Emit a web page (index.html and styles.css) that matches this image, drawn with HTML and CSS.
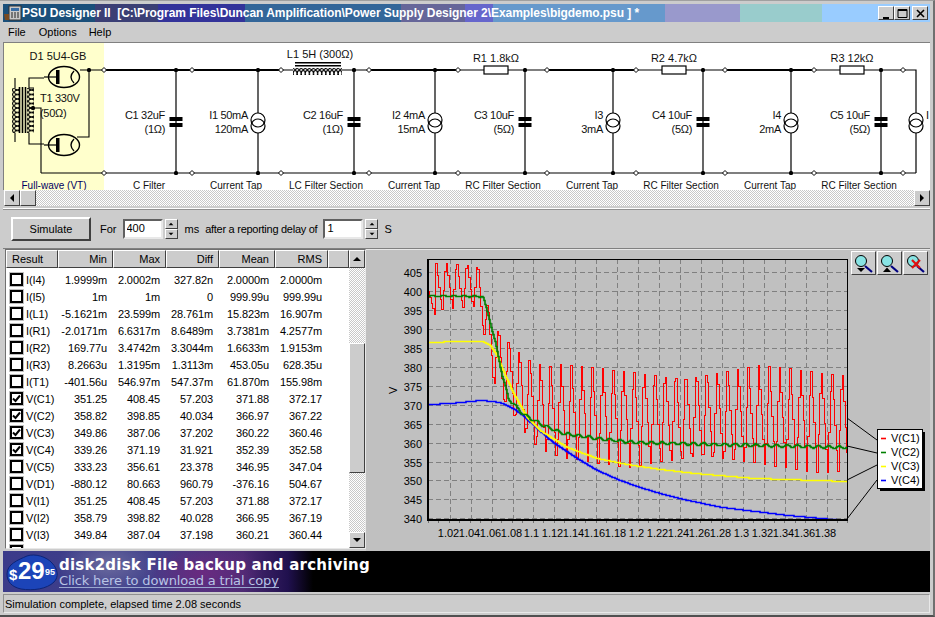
FILE: index.html
```html
<!DOCTYPE html>
<html lang="en">
<head>
<meta charset="utf-8">
<title>PSU Designer II</title>
<link rel="stylesheet" href="styles.css">
</head>
<body>
<div class="window">
  <div class="titlebar">
    <svg class="appicon" width="18" height="16" viewBox="0 0 18 16">
      <rect x="5" y="1" width="12" height="14" fill="#c8c8c8" stroke="#333"/>
      <rect x="7" y="3" width="8" height="3" fill="#3a6ea5"/>
      <path d="M7 8h2M10 8h2M13 8h2M7 10h2M10 10h2M13 10h2M7 12h2M10 12h2M13 12h2" stroke="#222"/>
      <path d="M0 9h5v6H1z" fill="#7a4a20"/>
    </svg>
    <span class="titletext">PSU Designer II&nbsp; [C:\Program Files\Duncan Amplification\Power Supply Designer 2\Examples\bigdemo.psu ] *</span>
    <div class="capbtns">
      <span class="capbtn"><svg width="15" height="13"><path d="M4 10h6v2H4z"/></svg></span>
      <span class="capbtn"><svg width="15" height="13"><path d="M3 2.5h9v8H3zM3 3.5h9" fill="none" stroke="#000"/></svg></span>
      <span class="capbtn capclose"><svg width="15" height="13"><path d="M4 3l7 7M11 3l-7 7" stroke="#000" stroke-width="1.6"/></svg></span>
    </div>
  </div>
  <div class="menubar"><span>File</span><span>Options</span><span>Help</span></div>

  <div class="schematic">
    <svg width="925" height="147" viewBox="4 43 925 147">
      <defs>
        <g id="node"><path d="M-2.5 0L0-2.5L2.5 0L0 2.5z" fill="#fff" stroke="#000"/></g>
        <g id="dot"><rect x="-2" y="-2" width="4" height="4" rx="1.5" fill="#000"/></g>
        <g id="cap"><path d="M0 70V173" stroke="#000" stroke-width="1.2"/><rect x="-6.5" y="117" width="13" height="4" fill="#000"/><rect x="-6.5" y="123" width="13" height="4" fill="#000"/></g>
        <g id="src"><path d="M0 70V113M0 133V173" stroke="#000" stroke-width="1.2"/><circle cy="120" r="7" fill="none" stroke="#000" stroke-width="1.2"/><circle cy="126" r="7" fill="none" stroke="#000" stroke-width="1.2"/></g>
        <g id="res"><rect x="0" y="66" width="24" height="8" fill="#fff" stroke="#000" stroke-width="1.2"/></g>
        <g id="tube"><ellipse cx="0" cy="0" rx="15.500" ry="10.500" fill="none" stroke="#000" stroke-width="1.4"/><rect x="-8" y="-7" width="3.5" height="14" fill="#000"/><path d="M10-6Q4 0 10 6" fill="none" stroke="#000" stroke-width="1.3"/><path d="M-20 0h12" stroke="#000" stroke-width="1.2"/></g>
        <pattern id="coilv" width="7" height="4.5" patternUnits="userSpaceOnUse"><ellipse cx="3.5" cy="2.25" rx="3" ry="2.1" fill="none" stroke="#000"/></pattern>
        <pattern id="coilh" x="293" width="4.1" height="7" patternUnits="userSpaceOnUse"><ellipse cx="2.05" cy="3.5" rx="1.9" ry="3" fill="none" stroke="#000"/></pattern>
      </defs>
      <rect x="4" y="43" width="100" height="147" fill="#ffffcc"/>
      <path d="M104 70H281M369 70H458M547 70H636M725 70H814" stroke="#000" stroke-width="2"/>
      <path d="M281 70H293M342 70H369M458 70H484M508 70H547M636 70H662M686 70H725M814 70H840M864 70H916V113M916 133V173M41 173H916" fill="none" stroke="#000" stroke-width="1.2"/>
      <rect x="295" y="62" width="46" height="1.5"/><rect x="295" y="65" width="46" height="1.5"/>
      <rect x="293" y="68" width="49" height="7" fill="url(#coilh)"/>

      <rect x="12" y="88" width="7" height="45" fill="url(#coilv)"/>
      <rect x="27" y="88" width="7" height="45" fill="url(#coilv)"/>
      <path d="M19.5 87V133M22.5 87V133M25.5 87V133" stroke="#000" stroke-width="1.6"/>
      <path d="M15 78V88M15 133V142M34 88H29V78H44M29 133V144H44M33 108H41V173M80 70H104M89 70V137H77" fill="none" stroke="#000" stroke-width="1.1"/>
      <use href="#tube" x="64" y="77"/><use href="#tube" x="64" y="145"/>
      <use href="#dot" x="89" y="70"/><use href="#dot" x="33" y="108"/>

      <use href="#cap" x="176"/><use href="#cap" x="354"/><use href="#cap" x="525"/><use href="#cap" x="703"/><use href="#cap" x="881"/>
      <use href="#src" x="258"/><use href="#src" x="435"/><use href="#src" x="613"/><use href="#src" x="791"/>
      <circle cx="916" cy="120" r="7" fill="none" stroke="#000" stroke-width="1.2"/><circle cx="916" cy="126" r="7" fill="none" stroke="#000" stroke-width="1.2"/>
      <use href="#res" x="484"/><use href="#res" x="662"/><use href="#res" x="840"/>

      <g id="rail-dots">
        <use href="#dot" x="176" y="70"/><use href="#dot" x="258" y="70"/><use href="#dot" x="354" y="70"/><use href="#dot" x="435" y="70"/><use href="#dot" x="525" y="70"/><use href="#dot" x="613" y="70"/><use href="#dot" x="703" y="70"/><use href="#dot" x="791" y="70"/><use href="#dot" x="881" y="70"/>
        <use href="#dot" x="176" y="173"/><use href="#dot" x="258" y="173"/><use href="#dot" x="354" y="173"/><use href="#dot" x="435" y="173"/><use href="#dot" x="525" y="173"/><use href="#dot" x="613" y="173"/><use href="#dot" x="703" y="173"/><use href="#dot" x="791" y="173"/><use href="#dot" x="881" y="173"/>
      </g>
      <g id="rail-nodes">
        <use href="#node" x="104" y="70"/><use href="#node" x="192" y="70"/><use href="#node" x="281" y="70"/><use href="#node" x="369" y="70"/><use href="#node" x="458" y="70"/><use href="#node" x="547" y="70"/><use href="#node" x="636" y="70"/><use href="#node" x="725" y="70"/><use href="#node" x="814" y="70"/><use href="#node" x="903" y="70"/>
        <use href="#node" x="104" y="173"/><use href="#node" x="192" y="173"/><use href="#node" x="281" y="173"/><use href="#node" x="369" y="173"/><use href="#node" x="458" y="173"/><use href="#node" x="547" y="173"/><use href="#node" x="636" y="173"/><use href="#node" x="725" y="173"/><use href="#node" x="814" y="173"/><use href="#node" x="903" y="173"/>
      </g>

      <g class="lbl mid">
        <text x="58" y="60">D1 5U4-GB</text>
        <text x="320" y="58">L1 5H (300Ω)</text>
        <text x="496" y="62">R1 1.8kΩ</text>
        <text x="674" y="62">R2 4.7kΩ</text>
        <text x="852" y="62">R3 12kΩ</text>
      </g>
      <g class="lbl tight">
        <text x="40" y="102">T1 330V</text>
        <text x="40" y="117">(50Ω)</text>
        <text x="926" y="119">I</text>
      </g>
      <g class="lbl end tight">
        <text x="165" y="119">C1 32uF</text><text x="165" y="133">(1Ω)</text>
        <text x="248" y="119">I1 50mA</text><text x="248" y="133">120mA</text>
        <text x="343" y="119">C2 16uF</text><text x="343" y="133">(1Ω)</text>
        <text x="425" y="119">I2 4mA</text><text x="425" y="133">15mA</text>
        <text x="514" y="119">C3 10uF</text><text x="514" y="133">(5Ω)</text>
        <text x="603" y="119">I3</text><text x="603" y="133">3mA</text>
        <text x="692" y="119">C4 10uF</text><text x="692" y="133">(5Ω)</text>
        <text x="781" y="119">I4</text><text x="781" y="133">2mA</text>
        <text x="870" y="119">C5 10uF</text><text x="870" y="133">(5Ω)</text>
      </g>
      <g class="lbl mid sect">
        <text class="navy" x="54" y="189">Full-wave (VT)</text>
        <text x="149" y="189">C Filter</text>
        <text x="236" y="189">Current Tap</text>
        <text x="326" y="189">LC Filter Section</text>
        <text x="414" y="189">Current Tap</text>
        <text x="503" y="189">RC Filter Section</text>
        <text x="592" y="189">Current Tap</text>
        <text x="681" y="189">RC Filter Section</text>
        <text x="770" y="189">Current Tap</text>
        <text x="859" y="189">RC Filter Section</text>
      </g>
    </svg>
  </div>

  <div class="hscroll">
    <span class="sbtn"><i class="arr arr-l"></i></span>
    <span class="sbtn"></span>
    <span class="strack"></span>
    <span class="sbtn"><i class="arr arr-r"></i></span>
  </div>

  <div class="toolbar">
    <button class="simulate">Simulate</button>
    <span class="t-for">For</span>
    <input class="field" value="400">
    <span class="spin"><span class="spinbtn"><i class="arr arr-u"></i></span><span class="spinbtn"><i class="arr arr-d"></i></span></span>
    <span class="t-ms">ms</span>
    <span class="t-after">after a reporting delay of</span>
    <input class="field" value="1">
    <span class="spin"><span class="spinbtn"><i class="arr arr-u"></i></span><span class="spinbtn"><i class="arr arr-d"></i></span></span>
    <span class="t-s">S</span>
  </div>

  <div class="main">
    <div class="results">
      <div class="grid">
        <div class="row-h">
          <span class="h h-l">Result</span><span class="h">Min</span><span class="h">Max</span><span class="h">Diff</span><span class="h">Mean</span><span class="h">RMS</span><span class="h"></span>
        </div>
        <div class="rows">
          <div class="row"><span class="name"><b class="cb"></b>I(I4)</span><span>1.9999m</span><span>2.0002m</span><span>327.82n</span><span>2.0000m</span><span>2.0000m</span></div>
          <div class="row"><span class="name"><b class="cb"></b>I(I5)</span><span>1m</span><span>1m</span><span>0</span><span>999.99u</span><span>999.99u</span></div>
          <div class="row"><span class="name"><b class="cb"></b>I(L1)</span><span>-5.1621m</span><span>23.599m</span><span>28.761m</span><span>15.823m</span><span>16.907m</span></div>
          <div class="row"><span class="name"><b class="cb"></b>I(R1)</span><span>-2.0171m</span><span>6.6317m</span><span>8.6489m</span><span>3.7381m</span><span>4.2577m</span></div>
          <div class="row"><span class="name"><b class="cb"></b>I(R2)</span><span>169.77u</span><span>3.4742m</span><span>3.3044m</span><span>1.6633m</span><span>1.9153m</span></div>
          <div class="row"><span class="name"><b class="cb"></b>I(R3)</span><span>8.2663u</span><span>1.3195m</span><span>1.3113m</span><span>453.05u</span><span>628.35u</span></div>
          <div class="row"><span class="name"><b class="cb"></b>I(T1)</span><span>-401.56u</span><span>546.97m</span><span>547.37m</span><span>61.870m</span><span>155.98m</span></div>
          <div class="row"><span class="name"><b class="cb on"><svg width="9" height="9"><path d="M1 4.5L3.5 7L8 1.5" fill="none" stroke="#000" stroke-width="2"/></svg></b>V(C1)</span><span>351.25</span><span>408.45</span><span>57.203</span><span>371.88</span><span>372.17</span></div>
          <div class="row"><span class="name"><b class="cb on"><svg width="9" height="9"><path d="M1 4.5L3.5 7L8 1.5" fill="none" stroke="#000" stroke-width="2"/></svg></b>V(C2)</span><span>358.82</span><span>398.85</span><span>40.034</span><span>366.97</span><span>367.22</span></div>
          <div class="row"><span class="name"><b class="cb on"><svg width="9" height="9"><path d="M1 4.5L3.5 7L8 1.5" fill="none" stroke="#000" stroke-width="2"/></svg></b>V(C3)</span><span>349.86</span><span>387.06</span><span>37.202</span><span>360.22</span><span>360.46</span></div>
          <div class="row"><span class="name"><b class="cb on"><svg width="9" height="9"><path d="M1 4.5L3.5 7L8 1.5" fill="none" stroke="#000" stroke-width="2"/></svg></b>V(C4)</span><span>339.26</span><span>371.19</span><span>31.921</span><span>352.39</span><span>352.58</span></div>
          <div class="row"><span class="name"><b class="cb"></b>V(C5)</span><span>333.23</span><span>356.61</span><span>23.378</span><span>346.95</span><span>347.04</span></div>
          <div class="row"><span class="name"><b class="cb"></b>V(D1)</span><span>-880.12</span><span>80.663</span><span>960.79</span><span>-376.16</span><span>504.67</span></div>
          <div class="row"><span class="name"><b class="cb"></b>V(I1)</span><span>351.25</span><span>408.45</span><span>57.203</span><span>371.88</span><span>372.17</span></div>
          <div class="row"><span class="name"><b class="cb"></b>V(I2)</span><span>358.79</span><span>398.82</span><span>40.028</span><span>366.95</span><span>367.19</span></div>
          <div class="row"><span class="name"><b class="cb"></b>V(I3)</span><span>349.84</span><span>387.04</span><span>37.198</span><span>360.21</span><span>360.44</span></div>
          <div class="row"><span class="name"><b class="cb"></b>V(I4)</span><span>339.23</span><span>371.16</span><span>31.930</span><span>352.37</span><span>352.56</span></div>
        </div>
      </div>
      <div class="vscroll">
        <span class="vbtn vbtn-up"><i class="arr arr-u"></i></span>
        <span class="vtrack vtrack-a"></span>
        <span class="vthumb"></span>
        <span class="vtrack vtrack-b"></span>
        <span class="vbtn vbtn-down"><i class="arr arr-d"></i></span>
      </div>
    </div>

    <div class="chart">
      <svg id="plot" width="564" height="302" viewBox="366 249 564 302"></svg>
      <div class="zoombtns">
        <span class="zbtn"><svg width="25" height="24" viewBox="0 0 25 24"><path d="M14 15l7 6" stroke="#000080" stroke-width="2.2"/><circle cx="10" cy="10" r="5.5" fill="#88e4e4" stroke="#000"/><path d="M6 17h8l-4 4z"/></svg></span>
        <span class="zbtn"><svg width="25" height="24" viewBox="0 0 25 24"><path d="M14 15l7 6" stroke="#000080" stroke-width="2.2"/><circle cx="10" cy="10" r="5.5" fill="#88e4e4" stroke="#000"/><path d="M6 21h8l-4-4.500z"/></svg></span>
        <span class="zbtn"><svg width="25" height="24" viewBox="0 0 25 24"><path d="M14 15l7 6" stroke="#000080" stroke-width="2.2"/><circle cx="10" cy="10" r="5.5" fill="#88e4e4" stroke="#000"/><path d="M9 9l8 8M17 9l-8 8" stroke="#e01010" stroke-width="2.2"/></svg></span>
      </div>
    </div>
  </div>

  <div class="banner">
    <svg class="price" width="54" height="38" viewBox="0 0 54 38">
      <path d="M2 21C2 11 13 7 22 3C30 0 42 4 47 10C53 16 54 24 49 29C42 36 28 38 16 36C7 34 2 29 2 21Z" fill="#1c44b8" stroke="#0c2478"/>
      <text class="p-s" x="4" y="27">$</text>
      <text class="p-n" x="13" y="26">29</text>
      <text class="p-c" x="40" y="22">95</text>
    </svg>
    <div class="adtext">
      <div class="ad1">disk2disk File backup and archiving</div>
      <div class="ad2">Click here to download a trial copy</div>
    </div>
  </div>

  <div class="status"><span>Simulation complete, elapsed time 2.08 seconds</span></div>
</div>
<script src="chart.js"></script>
</body>
</html>
```
FILE: styles.css
```css
* { box-sizing: border-box; }
html, body { margin: 0; padding: 0; }
body { background: #c8c8c8; font: 11px "Liberation Sans", Arial, sans-serif; color: #000; overflow: hidden; }

.window {
  width: 935px; height: 617px; padding: 3px 3px 0 3px; overflow: hidden;
  background: #cccccc; border-top: 1px solid #a0a0a0; border-right: 2px solid #707070; border-bottom: 2px solid #505050;
  display: flex; flex-direction: column;
}
.titlebar {
  height: 18px; width: 927px; flex: none; display: flex; align-items: center;
  color: #fff; font: bold 12px "Liberation Sans", sans-serif; letter-spacing: -.05px; white-space: pre;
  background: linear-gradient(to right,
    #1a4f7a 0 92px, #3b3f75 92px 155px, #33339a 155px 242px, #336699 242px 398px,
    #666699 398px 462px, #6666cc 462px 490px, #6699cc 490px 662px, #9999cc 662px 737px,
    #99cccc 737px 819px, #99ccff 819px 927px);
}
.appicon { flex: none; margin-left: 1px; }
.titletext { flex: none; }
.capbtns { margin-left: auto; margin-right: 2px; display: flex; }
.capbtn {
  width: 16px; height: 14px; background: #ccc; display: flex;
  border: 1px solid; border-color: #fff #404040 #404040 #fff;
}
.capclose { margin-left: 2px; }

.menubar { height: 20px; flex: none; display: flex; align-items: center; gap: 13px; padding-left: 5px; font-size: 11px; }
.menubar span:nth-child(3) { margin-left: -1px; }

.schematic {
  height: 148px; flex: none; background: #fff; overflow: hidden; width: 927px;
  border-top: 1px solid #808080; border-left: 1px solid #808080;
}
.schematic svg { display: block; }
.lbl text { font: 11px "Liberation Sans", sans-serif; fill: #111; }
.lbl.mid text { text-anchor: middle; }
.lbl.end text { text-anchor: end; }
.lbl.tight text { letter-spacing: -.3px; }
.lbl.sect text { font-size: 10px; }
.lbl.sect text.navy { fill: #000060; }

.hscroll { height: 16px; flex: none; width: 926px; margin-left: 1px; display: flex; }
.sbtn {
  width: 16px; height: 16px; flex: none; background: #ccc; display: flex; align-items: center; justify-content: center;
  border: 1px solid; border-color: #fff #404040 #404040 #fff;
}
.strack { flex: 1; background: repeating-conic-gradient(#fff 0 25%, #c8c8c8 0 50%) 0 0 / 2px 2px; }
.arr { display: block; width: 0; height: 0; border: 0 solid transparent; }
.arr-l { border-width: 4px 4px 4px 0; border-right-color: #000; }
.arr-r { border-width: 4px 0 4px 4px; border-left-color: #000; }
.arr-u { border-width: 0 4px 4px 4px; border-bottom-color: #000; }
.arr-d { border-width: 4px 4px 0 4px; border-top-color: #000; }

.toolbar {
  height: 41px; flex: none; display: flex; align-items: center; padding-left: 8px; font-size: 11px;
  border-top: 1px solid #fff; box-shadow: inset 0 1px 0 #909090; border-bottom: 1px solid #808080; margin-top: 2px;
}
.simulate {
  width: 80px; height: 24px; padding: 0; background: #ccc; font: 11px "Liberation Sans", sans-serif;
  border: 2px solid; border-color: #fff #404040 #404040 #fff;
}
.t-for { margin-left: 9px; }
.field {
  width: 40px; height: 20px; margin-left: 6px; padding: 0 0 2px 2px; background: #fff; font: 11px "Liberation Sans", sans-serif;
  border: 2px solid; border-color: #606060 #e8e8e8 #e8e8e8 #606060; border-radius: 0; outline: 0;
}
.spin { display: flex; flex-direction: column; margin-left: 2px; }
.spinbtn {
  width: 13px; height: 10px; background: #ccc; display: flex; align-items: center; justify-content: center;
  border: 1px solid; border-color: #fff #404040 #404040 #fff;
}
.spinbtn .arr { transform: scale(.6); }
.t-ms { margin-left: 7px; }
.t-s { margin-left: 6px; }
.t-after { margin-left: 6px; letter-spacing: -.27px; }

.main { height: 302px; flex: none; display: flex; }
.results {
  width: 361px; height: 300px; margin-left: 2px; flex: none; display: flex; background: #fff;
  border: 1px solid; border-color: #707070 #e8e8e8 #e8e8e8 #707070;
}
.grid { width: 343px; flex: none; display: flex; flex-direction: column; overflow: hidden; }
.row-h { display: grid; grid-template-columns: 52px 55px 53px 53px 56px 53px 21px; height: 18px; flex: none; }
.h {
  background: #ccc; text-align: right; padding: 2px 5px 0 0; line-height: 13px;
  border: 1px solid; border-color: #fff #404040 #404040 #fff;
}
.h-l { text-align: left; padding-left: 5px; }
.rows { padding-top: 3px; flex: 1; overflow: hidden; }
.row { display: grid; grid-template-columns: 52px 55px 53px 53px 56px 53px; height: 17px; align-items: center; text-align: right; letter-spacing: -.1px; }
.row > span { padding-right: 6px; }
.row > .name { display: flex; align-items: center; gap: 3px; padding: 0 0 0 4px; text-align: left; }
.cb {
  display: flex; width: 13px; height: 13px; flex: none; background: #fff;
  border: 2px solid #000; box-shadow: 0 0 0 1px #c0c0c0; font-weight: normal;
}
.vscroll { width: 16px; flex: none; display: flex; flex-direction: column; }
.vbtn, .vthumb {
  background: #ccc; display: flex; align-items: center; justify-content: center; flex: none;
  border: 1px solid; border-color: #fff #404040 #404040 #fff;
}
.vbtn-up { height: 18px; }
.vbtn-down { height: 16px; }
.vthumb { height: 130px; }
.vtrack { flex: none; background: repeating-conic-gradient(#fff 0 25%, #c8c8c8 0 50%) 0 0 / 2px 2px; }
.vtrack-a { height: 75px; }
.vtrack-b { height: 59px; }

.chart { position: relative; flex: 1; background: #c0c0c0; border-top: 1px solid #e8e8e8; }
.chart svg#plot { display: block; margin-top: -1px; }
.chart text { font: 11px "Liberation Sans", sans-serif; fill: #000; }
.zoombtns { position: absolute; top: 1px; right: 2px; display: flex; gap: 1px; }
.zbtn {
  width: 25px; height: 24px; background: #ccc; display: flex;
  border: 1px solid; border-color: #fff #404040 #404040 #fff;
}
.zbtn svg { flex: none; margin: -1px; }

.banner {
  height: 41px; flex: none; width: 927px; display: flex; align-items: center; overflow: hidden; color: #fff;
  background:
    radial-gradient(ellipse 50px 30px at 105px 14px, #6a6a9e, transparent),
    radial-gradient(ellipse 60px 30px at 200px 22px, #6a2a80, transparent),
    linear-gradient(to right, #3b3b8a 0, #40408a 150px, #4a2a72 240px, #20104e 285px, #000 310px);
}
.price { flex: none; margin-left: 2px; }
.p-s { font: bold 15px "Liberation Sans", sans-serif; fill: #fff; }
.p-n { font: bold 24px "Liberation Sans", sans-serif; fill: #fff; }
.p-c { font: bold 9px "Liberation Sans", sans-serif; fill: #fff; }
.adtext { padding-top: 1px; white-space: nowrap; }
.ad1 { font: bold 15px "DejaVu Sans", sans-serif; letter-spacing: .23px; line-height: 18px; }
.ad2 { font: 13px "DejaVu Sans", sans-serif; letter-spacing: -.17px; color: #b8c4e6; border-bottom: 1px solid #9aa8d0; line-height: 13px; width: max-content; }

.status {
  height: 19px; width: 927px; flex: none; margin-top: 2px; padding-left: 1px; font-size: 11px; display: flex; align-items: center;
  border: 1px solid; border-color: #909090 #e8e8e8 #e8e8e8 #909090;
}
```
FILE: chart.js
```js
(function () {
  var NS = 'http://www.w3.org/2000/svg';
  var svg = document.getElementById('plot');
  var L = 428, R = 847, T = 259, B = 519;

  function el(name, attrs, text) {
    var e = document.createElementNS(NS, name);
    for (var k in attrs) e.setAttribute(k, attrs[k]);
    if (text) e.textContent = text;
    svg.appendChild(e);
    return e;
  }
  function yOf(v) { return 272.3 + (405 - v) * 3.785; }
  function xOf(t) { return 449.7 + (t - 1.02) * 1047; }
  function lerp(pts, x) {
    if (x <= pts[0][0]) return pts[0][1];
    for (var i = 1; i < pts.length; i++) {
      if (x <= pts[i][0]) {
        var a = pts[i - 1], b = pts[i];
        return a[1] + (b[1] - a[1]) * (x - a[0]) / (b[0] - a[0]);
      }
    }
    return pts[pts.length - 1][1];
  }
  function stepPath(fn, from, to, dx) {
    var d = 'M' + from + ' ' + Math.round(fn(from)) + '.5';
    for (var x = from + dx; x <= to; x += dx) {
      d += 'H' + x + 'V' + Math.round(fn(x)) + '.5';
    }
    return d;
  }

  // grid
  var v, t, i;
  for (v = 340; v <= 405; v += 5) {
    var gy = Math.round(yOf(v)) + 0.5;
    el('path', { d: 'M' + L + ' ' + gy + 'H' + R, stroke: '#808080', 'stroke-dasharray': '5 3', fill: 'none' });
    el('text', { x: 422, y: gy + 4, 'text-anchor': 'end' }, String(v));
  }
  for (i = 1; i <= 19; i++) {
    t = 1 + i * 0.02;
    var gx = Math.round(xOf(t)) + 0.5;
    el('path', { d: 'M' + gx + ' ' + T + 'V' + B, stroke: '#808080', 'stroke-dasharray': '5 3', fill: 'none' });
    if (t < 1.39) {
      var s = String(Math.round(t * 100) / 100);
      el('text', { x: gx - 2, y: 537, 'text-anchor': 'middle' }, s);
    }
  }
  for (i = 0; i <= 40; i++) {
    var mx = Math.round(L + i * 10.475) + 0.5;
    el('path', { d: 'M' + mx + ' ' + B + 'V' + (B + 4), stroke: '#707070', fill: 'none' });
  }

  // V(C1): a fast charge up to each peak, a slower decay to the next trough
  var peaks = [408.6, 408.6, 408.6, 408.6, 408.6, 398, 392, 389, 386, 383.5, 382, 381, 381];
  var troughs = [395, 395, 395, 395, 387.6, 373.4, 368, 364, 359.6, 356.8, 355.2, 354.5, 354];
  var P = 10.42, first = 435, RISE = 4;
  function peakAt(k) { return k < peaks.length ? peaks[k] : 380.8 - (k - peaks.length) * 0.01; }
  function troughAt(k) { return k < troughs.length ? troughs[k] : 354 - (k - troughs.length) * 0.09; }
  function red(x) {
    var k = Math.floor((x - first) / P);
    var ph = (x - first) - k * P;
    var fall = P - RISE;
    if (k < 0) return yOf(400 - (x - 428) * 1.0);
    if (ph < fall) return yOf(peakAt(k) + (troughAt(k) - peakAt(k)) * (ph / fall));
    return yOf(troughAt(k) + (peakAt(k + 1) - troughAt(k)) * ((ph - fall) / RISE));
  }
  var clip = el('clipPath', { id: 'plotclip' });
  var cr = document.createElementNS(NS, 'rect');
  cr.setAttribute('x', L); cr.setAttribute('y', T); cr.setAttribute('width', R - L); cr.setAttribute('height', B - T);
  clip.appendChild(cr);
  var g = el('g', { 'clip-path': 'url(#plotclip)', fill: 'none' });
  function series(d, colour, w, crisp) {
    var p = document.createElementNS(NS, 'path');
    p.setAttribute('d', d); p.setAttribute('stroke', colour); p.setAttribute('stroke-width', w);
    if (crisp) p.setAttribute('shape-rendering', 'crispEdges');
    g.appendChild(p);
  }
  series(stepPath(red, L, R, 1.5), '#ff0000', 1, true);

  var blue = [[428,404],[450,403],[480,400],[493,401],[503,403],[513,408],[523,415],[537,428],[553,442],[577,458],[597,470],[620,480],[640,487],[660,493],[688,500],[722,507],[755,511],[788,515],[832,519],[847,521]];
  series(stepPath(function (x) { return lerp(blue, x); }, L, R, 1), '#0000ff', 1.6);

  var yellow = [[428,341.7],[483,341],[490,345],[497,355],[502,368],[513,392],[527,417],[540,430],[567,447],[597,458],[627,464],[660,469],[695,473],[755,478],[847,481]];
  series(stepPath(function (x) { return lerp(yellow, x); }, L, R, 1), '#ffff00', 1.6);

  var green = [[428,295.5],[481,296],[483,297],[488,315],[495,342],[502,375],[508,398],[522,413],[543,425],[563,433],[597,438],[633,442],[847,447]];
  series(stepPath(function (x) {
    var amp = x < 500 ? 0.7 : 1.4;
    return lerp(green, x) + amp * Math.sin((x - first) * 2 * Math.PI / P);
  }, L, R, 1), '#008000', 1.6);

  // frame
  el('path', { d: 'M428 259V520H847V259Z', fill: 'none', stroke: '#000', 'shape-rendering': 'crispEdges' });
  el('path', { d: 'M428 259V520H847', fill: 'none', stroke: '#000', 'stroke-width': 2.4, 'shape-rendering': 'crispEdges' });

  // axis title
  el('text', { x: 0, y: 0, transform: 'translate(397 394) rotate(-90)' }, 'V');

  // legend
  el('path', { d: 'M847 418L877 440M847 446L877 453M847 480L877 465M847 519L877 480', stroke: '#000', fill: 'none' });
  el('rect', { x: 880, y: 432, width: 45, height: 59, fill: '#000' });
  el('rect', { x: 877.5, y: 429.5, width: 45, height: 59, fill: '#fff', stroke: '#000' });
  var names = ['V(C1)', 'V(C2)', 'V(C3)', 'V(C4)'];
  var cols = ['#ff0000', '#008000', '#ffff00', '#0000ff'];
  for (i = 0; i < 4; i++) {
    var ly = 438 + i * 14;
    el('path', { d: 'M881 ' + (ly + 0.5) + 'h5', stroke: cols[i], 'stroke-width': 1.6, fill: 'none' });
    el('text', { x: 891, y: ly + 4 }, names[i]);
  }
})();
```
